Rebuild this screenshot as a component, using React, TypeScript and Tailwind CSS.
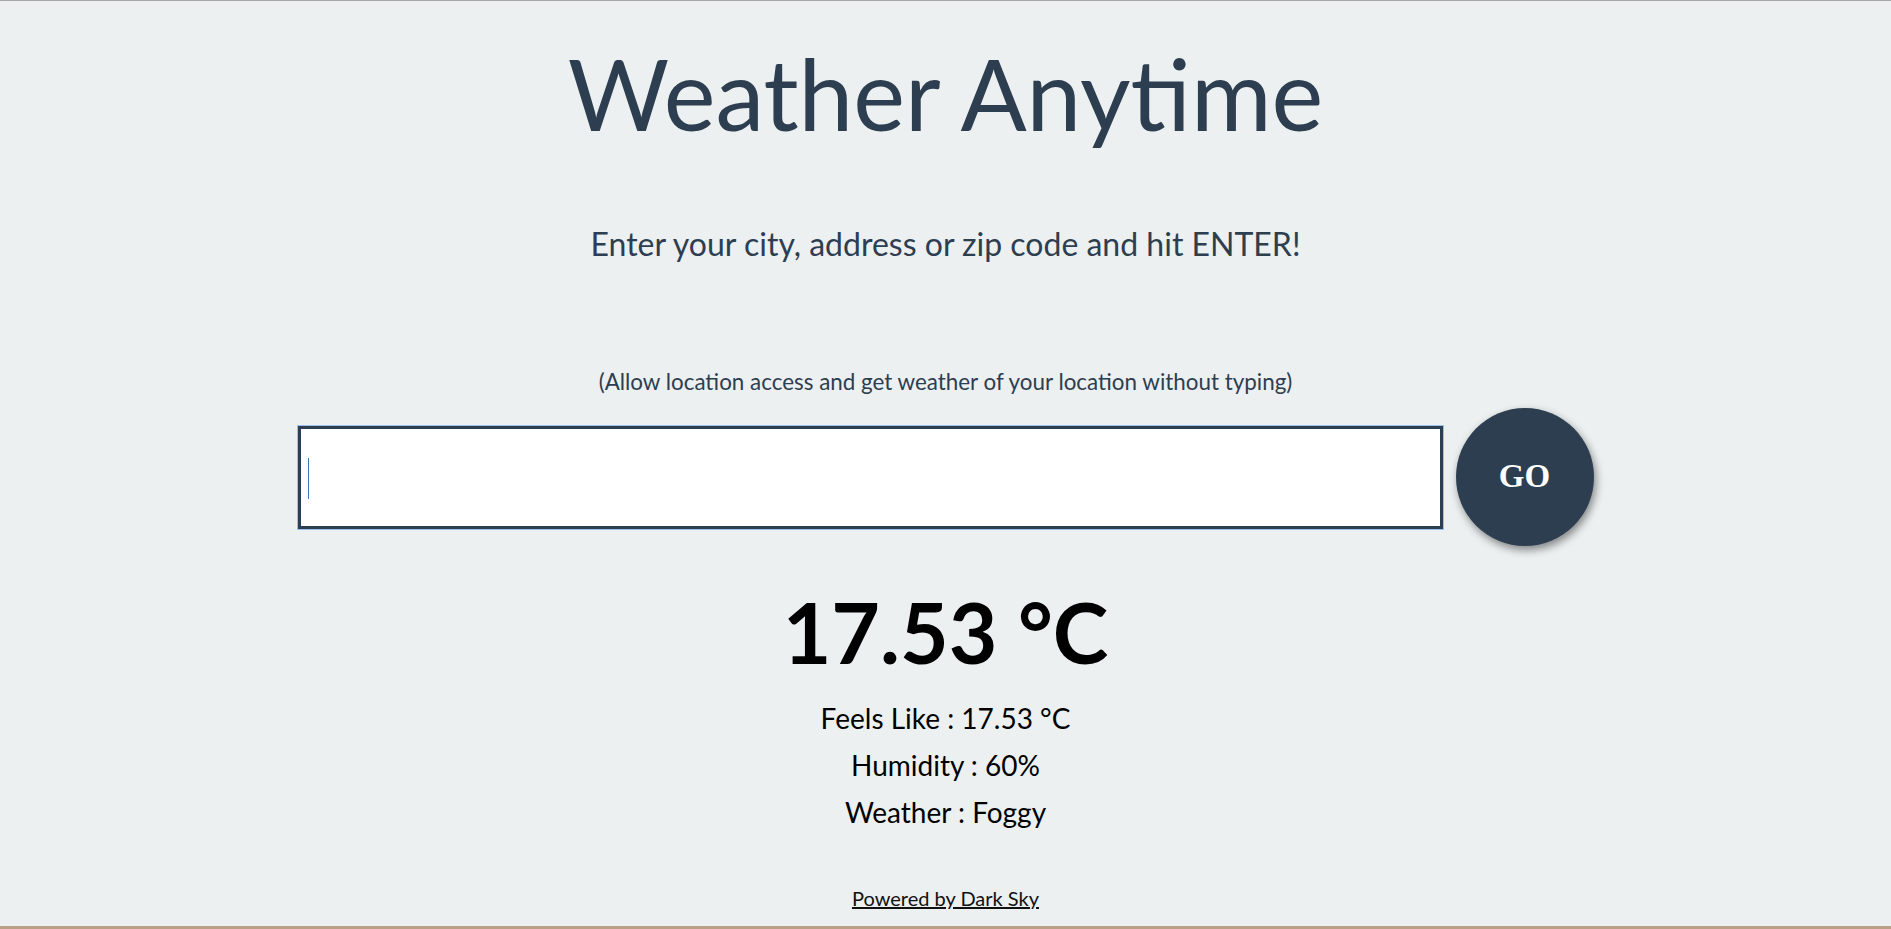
import { useState } from 'react'

const FONT = { fontFamily: 'Lato, "Open Sans", sans-serif' }

export default function App() {
  const [query, setQuery] = useState('')

  return (
    <div className="h-[929px] flex flex-col bg-[#ecf0f1] border-t border-[#a8a8a8] overflow-hidden" style={FONT}>
      <div className="flex-1 flex flex-col items-center">
        <h1 className="mt-[32px] text-[98px] leading-[120px] font-normal text-[#2c3e50]">
          Weather Anytime
        </h1>
        <p className="mt-[69px] text-[32px] leading-[44px] text-[#2c3e50]">
          Enter your city, address or zip code and hit ENTER!
        </p>
        <p className="mt-[101px] text-[22.4px] leading-[30px] text-[#2c3e50]">
          (Allow location access and get weather of your location without typing)
        </p>

        <div className="mt-[11px] flex items-center gap-[13px]">
          <div className="relative">
            <input
              value={query}
              onChange={(e) => setQuery(e.target.value)}
              className="block w-[1145px] h-[103px] bg-white border-[3px] border-[#2c3e50] outline outline-1 outline-[#9cc0ee] px-[10px] text-[32px] text-[#2c3e50] caret-[#3a78b8]"
            />
            {query === '' && (
              <span className="absolute left-[10px] top-[32px] w-[1px] h-[41px] bg-[#3a78b8] pointer-events-none" />
            )}
          </div>
          <button
            className="w-[138px] h-[138px] rounded-full bg-[#2c3e50] text-white text-[33px] font-bold shadow-[2px_4px_8px_rgba(0,0,0,0.45)]"
            style={{ fontFamily: '"Liberation Serif", serif' }}
          >
            GO
          </button>
        </div>

        <div className="mt-[38px] text-[84px] leading-[96px] font-bold text-black">17.53 °C</div>
        <div className="mt-[15px] flex flex-col items-center text-[28px] leading-[47px] text-black">
          <span>Feels Like : 17.53 °C</span>
          <span>Humidity : 60%</span>
          <span>Weather : Foggy</span>
        </div>

        <a href="#" className="mt-[50px] text-[20px] leading-[24px] text-[#111] underline">
          Powered by Dark Sky
        </a>
      </div>
      <div className="h-[3px] bg-[#b89f86]" />
    </div>
  )
}
